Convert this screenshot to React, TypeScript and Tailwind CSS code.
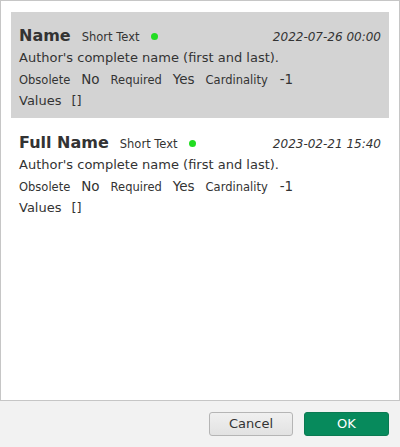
const fields = [
  {
    name: 'Name',
    type: 'Short Text',
    date: '2022-07-26 00:00',
    description: "Author's complete name (first and last).",
    obsolete: 'No',
    required: 'Yes',
    cardinality: '-1',
    values: '[]',
    selected: true,
  },
  {
    name: 'Full Name',
    type: 'Short Text',
    date: '2023-02-21 15:40',
    description: "Author's complete name (first and last).",
    obsolete: 'No',
    required: 'Yes',
    cardinality: '-1',
    values: '[]',
    selected: false,
  },
];

export default function App() {
  return (
    <div
      className="w-[400px] h-[447px] flex flex-col bg-[#f2f2f2] text-[#333333]"
      style={{ fontFamily: '"DejaVu Sans", Verdana, sans-serif' }}
    >
      <div className="h-[401px] bg-white border border-[#c6c6c6] px-[10px] pt-[11px] flex flex-col gap-px">
        {fields.map((f) => (
          <div
            key={f.name}
            className={`px-2 pt-[13px] pb-[7px] ${f.selected ? 'bg-[#d3d3d3]' : ''}`}
          >
            <div className="h-[22px] flex items-baseline leading-[22px]">
              <span className="text-[16px] font-bold">{f.name}</span>
              <span className="text-[11.5px] ml-[11px]">{f.type}</span>
              <span className="w-[7px] h-[7px] rounded-full bg-[#22dd22] ml-[11px] self-center mt-px" />
              <span className="ml-auto text-[12px] italic">{f.date}</span>
            </div>
            <div className="h-[21px] flex items-center text-[13px]">{f.description}</div>
            <div className="h-[22px] leading-[22px] whitespace-nowrap">
              <span className="text-[11.5px]">Obsolete</span>
              <span className="text-[13.5px] ml-[11px]">{f.obsolete}</span>
              <span className="text-[11.5px] ml-[11px]">Required</span>
              <span className="text-[13.5px] ml-[11px]">{f.required}</span>
              <span className="text-[11.5px] ml-[11px]">Cardinality</span>
              <span className="text-[13.5px] ml-[12px]">{f.cardinality}</span>
            </div>
            <div className="h-[21px] flex items-center text-[13px]">
              <span>Values</span>
              <span className="ml-[10px]">{f.values}</span>
            </div>
          </div>
        ))}
      </div>
      <div className="flex-1 flex items-start justify-end gap-[11px] pt-[11px] pr-[11px]">
        <button className="w-[84px] h-[24px] rounded-[3px] border border-[#b5b5b5] bg-gradient-to-b from-[#f0f0f0] to-[#e2e2e2] text-[13px] text-[#333333]">
          Cancel
        </button>
        <button className="w-[85px] h-[24px] rounded-[3px] border border-[#0a7a52] bg-[#078a5c] text-[13px] text-white">
          OK
        </button>
      </div>
    </div>
  );
}
